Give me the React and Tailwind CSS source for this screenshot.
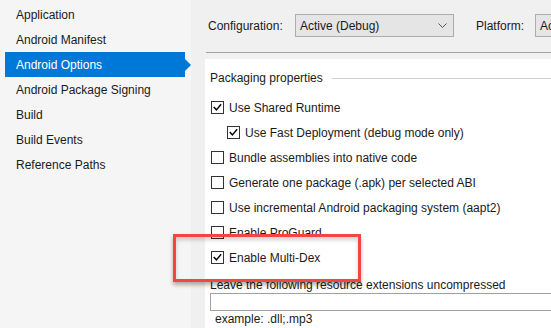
import React from "react";

const font = { fontFamily: '"Liberation Sans", Arial, sans-serif' };

function Check() {
  return (
    <svg width="13" height="13" viewBox="0 0 13 13" className="block">
      <polyline points="2.6,6.6 5.2,9.3 10.2,3.4" fill="none" stroke="#000" strokeWidth="1.7" strokeLinecap="square" />
    </svg>
  );
}

function Box({ checked }) {
  return (
    <div className="w-[13px] h-[13px] border border-[#333333] bg-white shrink-0 flex items-center justify-center">
      {checked ? <Check /> : null}
    </div>
  );
}

function Row({ label, checked, indent }) {
  return (
    <div className={"h-[25px] flex items-center " + (indent ? "pl-[22px]" : "pl-[6px]")}>
      <Box checked={checked} />
      <span className="ml-[5px] text-[12px] text-[#1a1a1a] whitespace-nowrap">{label}</span>
    </div>
  );
}

function Chevron() {
  return (
    <svg width="9" height="5" viewBox="0 0 9 5" className="block">
      <polyline points="0.5,0.5 4.5,4.5 8.5,0.5" fill="none" stroke="#555" strokeWidth="1" />
    </svg>
  );
}

export default function App() {
  const items = [
    "Application",
    "Android Manifest",
    "Android Options",
    "Android Package Signing",
    "Build",
    "Build Events",
    "Reference Paths",
  ];
  return (
    <div style={font} className="relative w-[551px] h-[328px] overflow-hidden flex bg-[#f0f0f0]">
      <div className="w-[191px] shrink-0 bg-[#f5f5f5] pt-[2px]">
        {items.map((it) =>
          it === "Android Options" ? (
            <div key={it} className="h-[25px] flex items-center pl-[5px]">
              <div className="w-[180px] h-[25px] bg-[#0078d7] text-white text-[12px] flex items-center pl-[11px]">
                {it}
              </div>
              <div className="w-0 h-0 border-t-[6px] border-b-[6px] border-l-[6px] border-t-transparent border-b-transparent border-l-[#0078d7]" />
            </div>
          ) : (
            <div key={it} className="h-[25px] flex items-center pl-[16px] text-[12px] text-[#1a1a1a]">
              {it}
            </div>
          )
        )}
      </div>
      <div className="flex-1 flex flex-col pl-[14px] min-w-0 overflow-hidden">
        <div className="pt-[14px] flex items-center pl-[3px] text-[12px] text-[#1a1a1a] whitespace-nowrap">
          <span className="w-[87px] shrink-0">Configuration:</span>
          <div className="w-[159px] shrink-0 h-[23px] border border-[#adadad] bg-[#e5e5e5] flex items-center justify-between pl-[4px] pr-[6px]">
            <span>Active (Debug)</span>
            <Chevron />
          </div>
          <span className="ml-[22px] w-[59px] shrink-0">Platform:</span>
          <div className="w-[120px] shrink-0 h-[23px] border border-[#adadad] bg-[#e5e5e5] flex items-center pl-[4px]">
            Active (Any CPU)
          </div>
        </div>
        <div className="mt-[15px] ml-[1px] h-px bg-[#a0a0a0]" />
        <div className="mt-[6px] flex-1 bg-white pl-[5px]">
          <div className="mt-[11px] h-[16px] flex items-center text-[12px] text-[#1a1a1a]">
            <span className="whitespace-nowrap">Packaging properties</span>
            <div className="ml-[9px] flex-1 h-px bg-[#d0d0d0]" />
          </div>
          <div className="mt-[9px] -ml-[5px]">
            <Row label="Use Shared Runtime" checked />
            <Row label="Use Fast Deployment (debug mode only)" checked indent />
            <Row label="Bundle assemblies into native code" />
            <Row label="Generate one package (.apk) per selected ABI" />
            <Row label="Use incremental Android packaging system (aapt2)" />
            <Row label="Enable ProGuard" />
            <Row label="Enable Multi-Dex" checked />
          </div>
          <div className="mt-[7px] h-[16px] flex items-center text-[12px] text-[#1a1a1a] whitespace-nowrap">
            Leave the following resource extensions uncompressed
          </div>
          <div className="h-[18px] border border-[#a0a0a0] border-r-0 bg-white" />
          <div className="h-[16px] flex items-center pl-[5px] text-[12px] text-[#1a1a1a] whitespace-nowrap">
            example: .dll;.mp3
          </div>
        </div>
      </div>
      <div className="absolute left-[173px] top-[234px] w-[188px] h-[48px] border-[3px] border-[#f44545] shadow-[0_3px_4px_rgba(0,0,0,0.3),inset_0_3px_4px_rgba(0,0,0,0.18)]" />
    </div>
  );
}
